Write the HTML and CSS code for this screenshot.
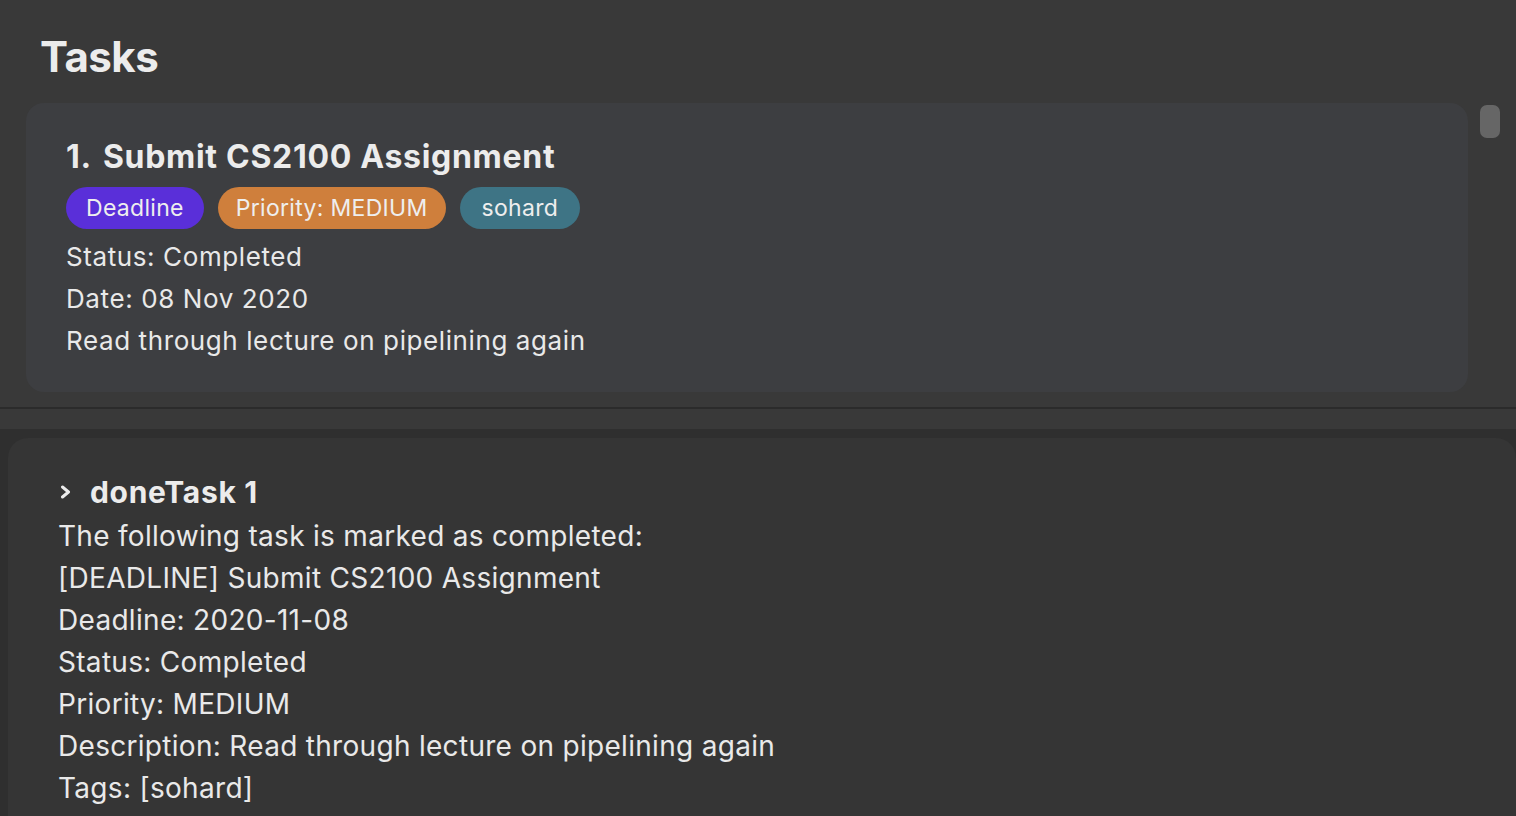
FILE: index.html
```html
<!DOCTYPE html>
<html lang="en">
<head>
<meta charset="utf-8">
<title>Tasks</title>
<link rel="stylesheet" href="styles.css">
</head>
<body>
<div class="app">
  <section class="tasks-pane">
    <h1 class="pane-title">Tasks</h1>
    <div class="list-area">
      <div class="task-list">
        <article class="task-card">
          <h2 class="task-title"><span class="task-index">1.</span>Submit CS2100 Assignment</h2>
          <div class="badges">
            <span class="badge badge-type">Deadline</span>
            <span class="badge badge-priority">Priority: MEDIUM</span>
            <span class="badge badge-tag">sohard</span>
          </div>
          <p class="task-line">Status: Completed</p>
          <p class="task-line">Date: 08 Nov 2020</p>
          <p class="task-line">Read through lecture on pipelining again</p>
        </article>
      </div>
      <div class="scrollbar"><div class="scroll-thumb"></div></div>
    </div>
  </section>
  <div class="divider"></div>
  <div class="gap-strip"></div>
  <section class="result-outer">
    <div class="result-panel">
      <div class="command-line">
        <svg class="chevron" width="12" height="14" viewBox="0 0 12 14" aria-hidden="true"><path d="M2.5 2 L8.5 7 L2.5 12" fill="none" stroke="#ececec" stroke-width="3" stroke-linecap="round" stroke-linejoin="round"/></svg>
        <span class="command">doneTask 1</span>
      </div>
      <p class="result-line">The following task is marked as completed:</p>
      <p class="result-line">[DEADLINE] Submit CS2100 Assignment</p>
      <p class="result-line">Deadline: 2020-11-08</p>
      <p class="result-line">Status: Completed</p>
      <p class="result-line">Priority: MEDIUM</p>
      <p class="result-line">Description: Read through lecture on pipelining again</p>
      <p class="result-line">Tags: [sohard]</p>
    </div>
  </section>
</div>
</body>
</html>
```
FILE: styles.css
```css
html, body {
  margin: 0;
  padding: 0;
  height: 100%;
  overflow: hidden;
}
body {
  background: #393939;
  color: #e9e9e9;
  font-family: "Inter", "Lato", sans-serif;
}
.app {
  display: flex;
  flex-direction: column;
  height: 816px;
}
.tasks-pane {
  height: 407px;
  display: flex;
  flex-direction: column;
  background: #393939;
}
.pane-title {
  margin: 0;
  padding: 34px 0 0 40px;
  height: 103px;
  box-sizing: border-box;
  font-size: 42px;
  line-height: 46px;
  font-weight: 700;
  color: #ececec;
  letter-spacing: -0.5px;
}
.list-area {
  display: flex;
  padding: 0 0 0 26px;
  gap: 12px;
}
.task-list {
  flex: 1;
}
.task-card {
  background: #3d3e41;
  border-radius: 18px;
  padding: 34px 40px 30px;
  height: 289px;
  box-sizing: border-box;
}
.task-title {
  margin: 0;
  font-size: 32px;
  line-height: 40px;
  font-weight: 700;
  color: #ececec;
  letter-spacing: 0.7px;
}
.task-index {
  margin-right: 11px;
}
.badges {
  display: flex;
  gap: 14px;
  margin: 10px 0 7px;
}
.badge {
  height: 42px;
  line-height: 42px;
  padding: 0 20px;
  border-radius: 21px;
  font-size: 23px;
  letter-spacing: 0.3px;
  color: #eeeeee;
}
.badge-type { background: #5a2fd9; }
.badge-priority { background: #cf7f3c; padding: 0 18px; }
.badge-tag { background: #3e7485; padding: 0 22px; }
.task-line {
  margin: 0;
  font-size: 26px;
  line-height: 42px;
  letter-spacing: 0.6px;
}
.scrollbar {
  width: 36px;
  padding-top: 2px;
}
.scroll-thumb {
  width: 20px;
  height: 33px;
  border-radius: 7px;
  background: #666666;
}
.divider {
  height: 2px;
  background: #2b2b2b;
}
.gap-strip {
  height: 20px;
  background: #393939;
}
.result-outer {
  flex: 1;
  background: #2f2f2f;
  padding: 9px 0 0 8px;
  display: flex;
}
.result-panel {
  flex: 1;
  background: #353535;
  border-radius: 20px 20px 0 0;
  padding: 33px 0 0 50px;
}
.command-line {
  display: flex;
  align-items: center;
  height: 42px;
  gap: 18px;
  padding-left: 2px;
  margin-bottom: 2px;
}
.chevron {
  display: block;
}
.command {
  font-size: 30px;
  font-weight: 700;
  color: #ececec;
  letter-spacing: 0.7px;
}
.result-line {
  margin: 0;
  font-size: 28px;
  line-height: 42px;
  letter-spacing: 0.3px;
}
```
